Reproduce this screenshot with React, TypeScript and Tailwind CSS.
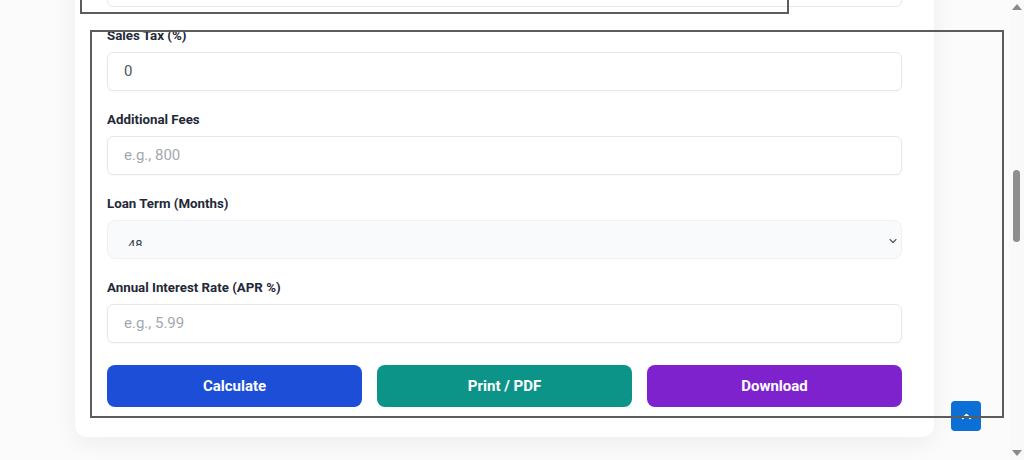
import { ChevronDown, ChevronUp } from "lucide-react"

// Form fields shown in the card.
const fields = [
  { label: "Sales Tax (%)", value: "0" },
  { label: "Additional Fees", placeholder: "e.g., 800" },
  { label: "Loan Term (Months)", select: "48" },
  { label: "Annual Interest Rate (APR %)", placeholder: "e.g., 5.99" },
]

function Field({ label, value, placeholder, select }: { label: string; value?: string; placeholder?: string; select?: string }) {
  return (
    <div className="mt-[19px]">
      <div className="mb-[6px] h-[20px] text-[13.3px] font-bold leading-[20px] text-[#1f2937]">{label}</div>
      {select ? (
        <div className="flex h-[39px] items-start justify-between rounded-lg border border-[#eef0f3] bg-[#f9fafb] pl-[20px] pr-[2px] pt-[12px]">
          <div className="h-[13px] overflow-hidden">
            <div className="pt-[5px] text-[13px] leading-none text-[#374151]">{select}</div>
          </div>
          <ChevronDown className="mt-[2px] h-[12px] w-[12px] text-[#4b5563]" strokeWidth={2.2} />
        </div>
      ) : (
        <div className="flex h-[39px] items-center rounded-md border border-[#e5e7eb] bg-white px-4 text-[15px] shadow-[0_1px_2px_rgba(0,0,0,0.03)]">
          {value ? <span className="text-[#4b5563]">{value}</span> : <span className="text-[#a3a8b0]">{placeholder}</span>}
        </div>
      )}
    </div>
  )
}

export default function App() {
  return (
    <div className="relative flex h-[460px] w-full overflow-hidden bg-[#fbfbfb] font-['Roboto',sans-serif]">
      <div className="flex-1">
        <div className="ml-[75px] mt-[-32px] w-[859px] rounded-b-xl bg-white px-8 pb-[30px] shadow-[0_6px_24px_rgba(0,0,0,0.06)]">
          <div className="h-[39px] rounded-md border border-[#e5e7eb] bg-white" />
          {fields.map((f) => (
            <Field key={f.label} {...f} />
          ))}
          <div className="mt-[22px] grid grid-cols-3 gap-[15px]">
            <button className="h-[42px] rounded-lg bg-[#1d4ed8] text-[15px] font-bold text-white">Calculate</button>
            <button className="h-[42px] rounded-lg bg-[#0d9488] text-[15px] font-bold text-white">Print / PDF</button>
            <button className="h-[42px] rounded-lg bg-[#7e22ce] text-[15px] font-bold text-white">Download</button>
          </div>
        </div>
      </div>

      {/* scrollbar */}
      <div className="flex w-[15px] flex-col items-center justify-between bg-[#f9f9f9] py-[4px]">
        <div className="h-0 w-0 border-x-[5px] border-b-[6px] border-x-transparent border-b-[#8a8a8a]" />
        <div className="mt-[160px] h-[72px] w-[7px] rounded-full bg-[#8e8e8e]" />
        <div className="flex-1" />
        <div className="h-0 w-0 border-x-[5px] border-t-[6px] border-x-transparent border-t-[#8a8a8a]" />
      </div>

      {/* back to top */}
      <button className="absolute left-[951px] top-[401px] flex h-[30px] w-[30px] items-center justify-center rounded-sm bg-[#0b6fd6] text-white">
        <ChevronUp className="h-[15px] w-[15px]" strokeWidth={3} />
      </button>

      {/* outline overlays */}
      <div className="pointer-events-none absolute left-[80px] top-[-20px] z-10 h-[34px] w-[709px] border-2 border-[#5c5c5c]" />
      <div className="pointer-events-none absolute left-[90px] top-[30px] z-10 h-[388px] w-[914px] border-2 border-[#5c5c5c]" />
    </div>
  )
}
